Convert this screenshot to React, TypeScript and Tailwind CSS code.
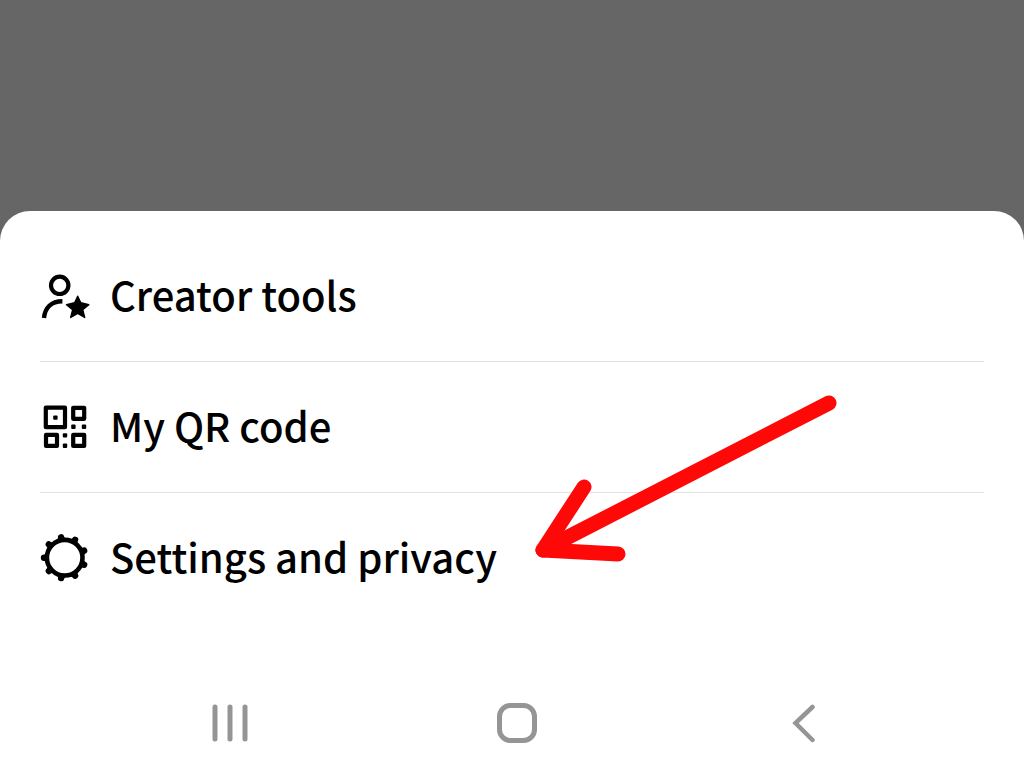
const TOOTH_ANGLES = [20, 60, 100, 140, 180, 220, 260, 300, 340];

function CreatorIcon() {
  return (
    <svg viewBox="0 0 50 50" className="size-[50px] shrink-0" fill="none" aria-hidden="true">
      <circle cx="19.7" cy="14.3" r="8.7" stroke="currentColor" strokeWidth="4.2" />
      <path d="M4 47C5 37 11 30.3 22.4 30.3" stroke="currentColor" strokeWidth="4.4" />
      <path
        d="M37.7 25.2L40.8 31.7L48.8 33.8L42.7 38.8L44.7 46.5L37.7 42.5L30.7 46.5L32.6 38.8L26.5 33.8L34.6 31.7Z"
        fill="currentColor"
        stroke="currentColor"
        strokeWidth="1.4"
        strokeLinejoin="round"
      />
    </svg>
  );
}

function QrIcon() {
  return (
    <svg viewBox="0 0 50 50" className="size-[50px] shrink-0" fill="none" aria-hidden="true">
      <g stroke="currentColor" strokeWidth="4.2" strokeLinejoin="round">
        <rect x="5.8" y="5.6" width="19.2" height="19.6" />
        <rect x="33.2" y="5.8" width="11" height="11" />
        <rect x="6" y="32.9" width="11" height="11" />
        <rect x="33.2" y="32.9" width="11" height="11" />
      </g>
      <g fill="currentColor">
        <rect x="13.2" y="13.4" width="4.4" height="4.4" rx="1" />
        <rect x="31.2" y="22.6" width="4.4" height="4.4" rx="1" />
        <rect x="41.8" y="22.6" width="4.4" height="4.4" rx="1" />
        <rect x="22.8" y="31.2" width="4.4" height="4.4" rx="1" />
        <rect x="22.8" y="41.6" width="4.4" height="4.4" rx="1" />
      </g>
    </svg>
  );
}

function GearIcon() {
  return (
    <svg viewBox="0 0 50 50" className="size-[50px] shrink-0" fill="none" aria-hidden="true">
      <circle cx="24.7" cy="24.7" r="17.8" stroke="currentColor" strokeWidth="4.6" />
      {TOOTH_ANGLES.map((angle) => (
        <path
          key={angle}
          d="M41 17.5Q42.9 21.3 45.4 21.5A3.2 3.2 0 0 1 45.4 27.9Q42.9 28.1 41 31.9Z"
          fill="currentColor"
          transform={`rotate(${angle} 24.7 24.7)`}
        />
      ))}
    </svg>
  );
}

function PointerArrow() {
  return (
    <svg
      viewBox="0 0 320 190"
      className="pointer-events-none absolute top-[179px] left-[530px] h-[190px] w-[320px]"
      fill="none"
      stroke="#fe0808"
      strokeWidth="15"
      strokeLinecap="round"
      strokeLinejoin="round"
      aria-hidden="true"
    >
      <path d="M299 13L13 160" />
      <path d="M54 97L13 160L88 164" />
    </svg>
  );
}

const menuItems = [
  { id: 'creator', label: 'Creator tools', icon: <CreatorIcon /> },
  { id: 'qr', label: 'My QR code', icon: <QrIcon /> },
  { id: 'settings', label: 'Settings and privacy', icon: <GearIcon /> },
];

export default function App() {
  return (
    <div className="flex min-h-screen flex-col justify-end bg-[#666666] font-['Noto_Sans_CJK_SC','Noto_Sans',sans-serif]">
      <main className="relative rounded-t-[30px] bg-white pt-5">
        <ul className="mx-10 divide-y divide-[#e3e3e3]">
          {menuItems.map((item) => (
            <li key={item.id}>
              <button
                type="button"
                className="flex h-[130px] w-full items-center gap-5 text-left text-[40px] leading-[60px] font-medium text-black"
              >
                {item.icon}
                <span className="pb-1">{item.label}</span>
              </button>
            </li>
          ))}
        </ul>

        <PointerArrow />

        {/* System navigation */}
        <nav className="mt-20 grid grid-cols-3 justify-items-center pr-[77px] pb-[39px] pl-[86px] text-[#959595]">
          <button type="button" aria-label="Recent apps">
            <svg viewBox="0 0 40 40" className="size-10" stroke="currentColor" strokeWidth="5" strokeLinecap="round">
              <path d="M5 4V36M20 4V36M35 4V36" />
            </svg>
          </button>
          <button type="button" aria-label="Home">
            <svg viewBox="0 0 40 40" className="size-10" fill="none" stroke="currentColor" strokeWidth="5">
              <rect x="2.5" y="2.5" width="35" height="35" rx="11" />
            </svg>
          </button>
          <button type="button" aria-label="Back">
            <svg
              viewBox="0 0 40 40"
              className="size-10"
              fill="none"
              stroke="currentColor"
              strokeWidth="4.5"
              strokeLinecap="round"
            >
              <path d="M28.5 4L11.5 20L28.5 37" />
            </svg>
          </button>
        </nav>
      </main>
    </div>
  );
}
